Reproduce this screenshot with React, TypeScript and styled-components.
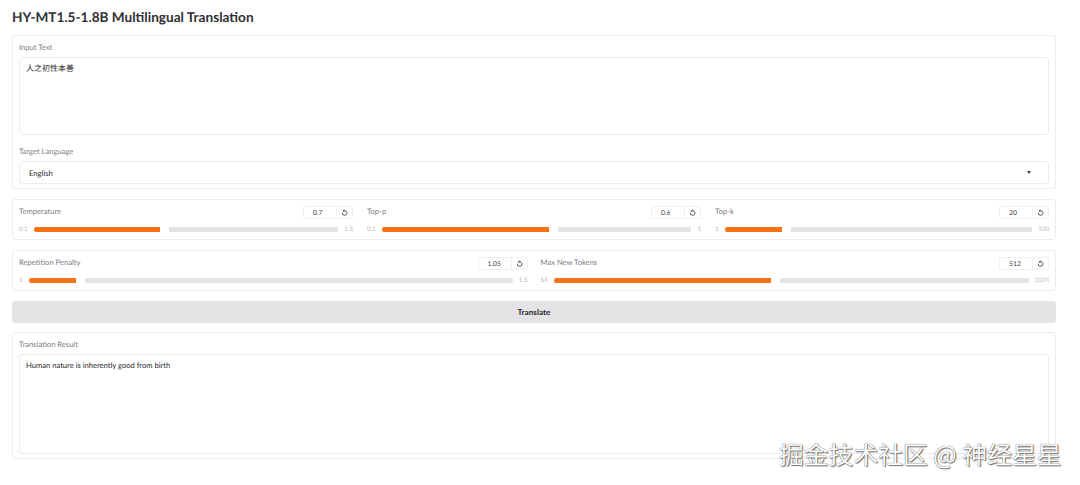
import styled, { createGlobalStyle } from 'styled-components';

const GlobalStyle = createGlobalStyle`
  html, body {
    margin: 0;
    padding: 0;
    background: #fff;
    overflow: hidden;
  }
  body {
    font-family: Lato, 'Noto Sans CJK SC', sans-serif;
    color: #3f3f46;
    text-rendering: geometricPrecision;
  }
`;

const Page = styled.div`
  position: relative;
  box-sizing: border-box;
  width: 1080px;
  height: 485px;
  padding: 8px 24px 0 12px;
  display: flex;
  flex-direction: column;
`;

const Title = styled.h1`
  margin: 0 0 9px;
  height: 18px;
  font-size: 13.6px;
  line-height: 18px;
  font-weight: 700;
  color: #2f2f33;
`;

const Panel = styled.section<{ $mb?: number }>`
  box-sizing: border-box;
  border: 1px solid #ececee;
  border-radius: 3px;
  padding: 6px 6px 4px;
  margin-bottom: ${(p) => p.$mb ?? 10}px;
  display: flex;
  flex-direction: column;
`;

const Label = styled.div`
  font-size: 7.6px;
  line-height: 11px;
  color: #7c7c85;
`;

const TextBox = styled.div<{ $h: number; $size?: number }>`
  box-sizing: border-box;
  height: ${(p) => p.$h}px;
  margin-top: 4px;
  border: 1px solid #ececee;
  border-radius: 3px;
  padding: 5px 6px;
  font-size: ${(p) => p.$size ?? 8}px;
  line-height: 11px;
  color: #27272a;
`;

const SelectBox = styled.div`
  box-sizing: border-box;
  height: 23px;
  margin-top: 4px;
  border: 1px solid #ececee;
  border-radius: 3px;
  padding: 0 17px 0 9px;
  display: flex;
  align-items: center;
  justify-content: space-between;
  font-size: 7.7px;
  color: #27272a;
`;

const Caret = styled.span`
  width: 0;
  height: 0;
  border-left: 2.5px solid transparent;
  border-right: 2.5px solid transparent;
  border-top: 3px solid #3f3f46;
`;

const SliderGrid = styled.div<{ $cols: number; $gap: number }>`
  display: grid;
  grid-template-columns: repeat(${(p) => p.$cols}, 1fr);
  column-gap: ${(p) => p.$gap}px;
`;

const SliderBlock = styled.div`
  display: flex;
  flex-direction: column;
`;

const SliderHead = styled.div`
  display: flex;
  justify-content: space-between;
  align-items: flex-start;
  height: 13px;
  margin-bottom: 5px;
`;

const NumberField = styled.div`
  box-sizing: border-box;
  width: 50px;
  height: 13px;
  border: 1px solid #f0f0f2;
  border-radius: 2px;
  display: flex;
  align-items: stretch;
`;

const NumberValue = styled.span`
  flex: 1;
  padding-left: 9px;
  font-size: 6.8px;
  line-height: 12px;
  color: #3f3f46;
`;

const ResetButton = styled.span`
  width: 15px;
  border-left: 1px solid #f0f0f2;
  display: flex;
  align-items: center;
  justify-content: center;
  color: #3f3f46;
`;

const SliderRow = styled.div`
  display: flex;
  align-items: center;
  height: 11px;
  gap: 6px;
`;

const Bound = styled.span`
  font-size: 6.2px;
  line-height: 11px;
  color: #b9b9c0;
`;

const Bar = styled.div`
  flex: 1;
  display: flex;
  gap: 9px;
`;

const Filled = styled.div<{ $ratio: number }>`
  flex: ${(p) => p.$ratio} 1 0;
  height: 4.5px;
  border-radius: 2px 0 0 2px;
  background: #f97316;
`;

const Rest = styled.div<{ $ratio: number }>`
  flex: ${(p) => 1 - p.$ratio} 1 0;
  height: 4.5px;
  background: #e4e4e7;
`;

const TranslateButton = styled.button`
  height: 22px;
  margin-bottom: 9px;
  border: 0;
  border-radius: 3px;
  padding: 0;
  background: #e4e4e7;
  font-family: inherit;
  font-size: 8.2px;
  font-weight: 700;
  color: #27272a;
`;

const Spaced = styled.div`
  margin-top: 11px;
`;

const Watermark = styled.div`
  position: absolute;
  left: 779px;
  top: 439px;
  font-family: 'Noto Sans CJK SC', sans-serif;
  font-size: 24.8px;
  line-height: 30px;
  white-space: nowrap;
  color: #fff;
  text-shadow: 0 0 1px #333, 1px 1px 1px #777;
`;

const ResetIcon = () => (
  <svg width="7" height="7" viewBox="0 0 24 24" fill="none" stroke="currentColor" strokeWidth="2.8">
    <path d="M9 6.5a8 8 0 1 1-4.5 6" />
    <path d="M12 2 7.5 6.5 12 11" />
  </svg>
);

type SliderProps = { label: string; value: number; min: number; max: number };

const Slider = ({ label, value, min, max }: SliderProps) => {
  const ratio = (value - min) / (max - min);
  return (
    <SliderBlock>
      <SliderHead>
        <Label>{label}</Label>
        <NumberField>
          <NumberValue>{value}</NumberValue>
          <ResetButton>
            <ResetIcon />
          </ResetButton>
        </NumberField>
      </SliderHead>
      <SliderRow>
        <Bound>{min}</Bound>
        <Bar>
          <Filled $ratio={ratio} />
          <Rest $ratio={ratio} />
        </Bar>
        <Bound>{max}</Bound>
      </SliderRow>
    </SliderBlock>
  );
};

const App = () => (
  <Page>
    <GlobalStyle />
    <Title>HY-MT1.5-1.8B Multilingual Translation</Title>
    <Panel $mb={10}>
      <Label>Input Text</Label>
      <TextBox $h={78}>人之初性本善</TextBox>
      <Spaced>
        <Label>Target Language</Label>
        <SelectBox>
          English
          <Caret />
        </SelectBox>
      </Spaced>
    </Panel>
    <Panel>
      <SliderGrid $cols={3} $gap={14}>
        <Slider label="Temperature" value={0.7} min={0.1} max={1.5} />
        <Slider label="Top-p" value={0.6} min={0.1} max={1} />
        <Slider label="Top-k" value={20} min={1} max={100} />
      </SliderGrid>
    </Panel>
    <Panel>
      <SliderGrid $cols={2} $gap={13}>
        <Slider label="Repetition Penalty" value={1.05} min={1} max={1.5} />
        <Slider label="Max New Tokens" value={512} min={64} max={1024} />
      </SliderGrid>
    </Panel>
    <TranslateButton>Translate</TranslateButton>
    <Panel $mb={0}>
      <Label>Translation Result</Label>
      <TextBox $h={100} $size={7.6}>Human nature is inherently good from birth</TextBox>
    </Panel>
    <Watermark>掘金技术社区 @ 神经星星</Watermark>
  </Page>
);

export default App;
